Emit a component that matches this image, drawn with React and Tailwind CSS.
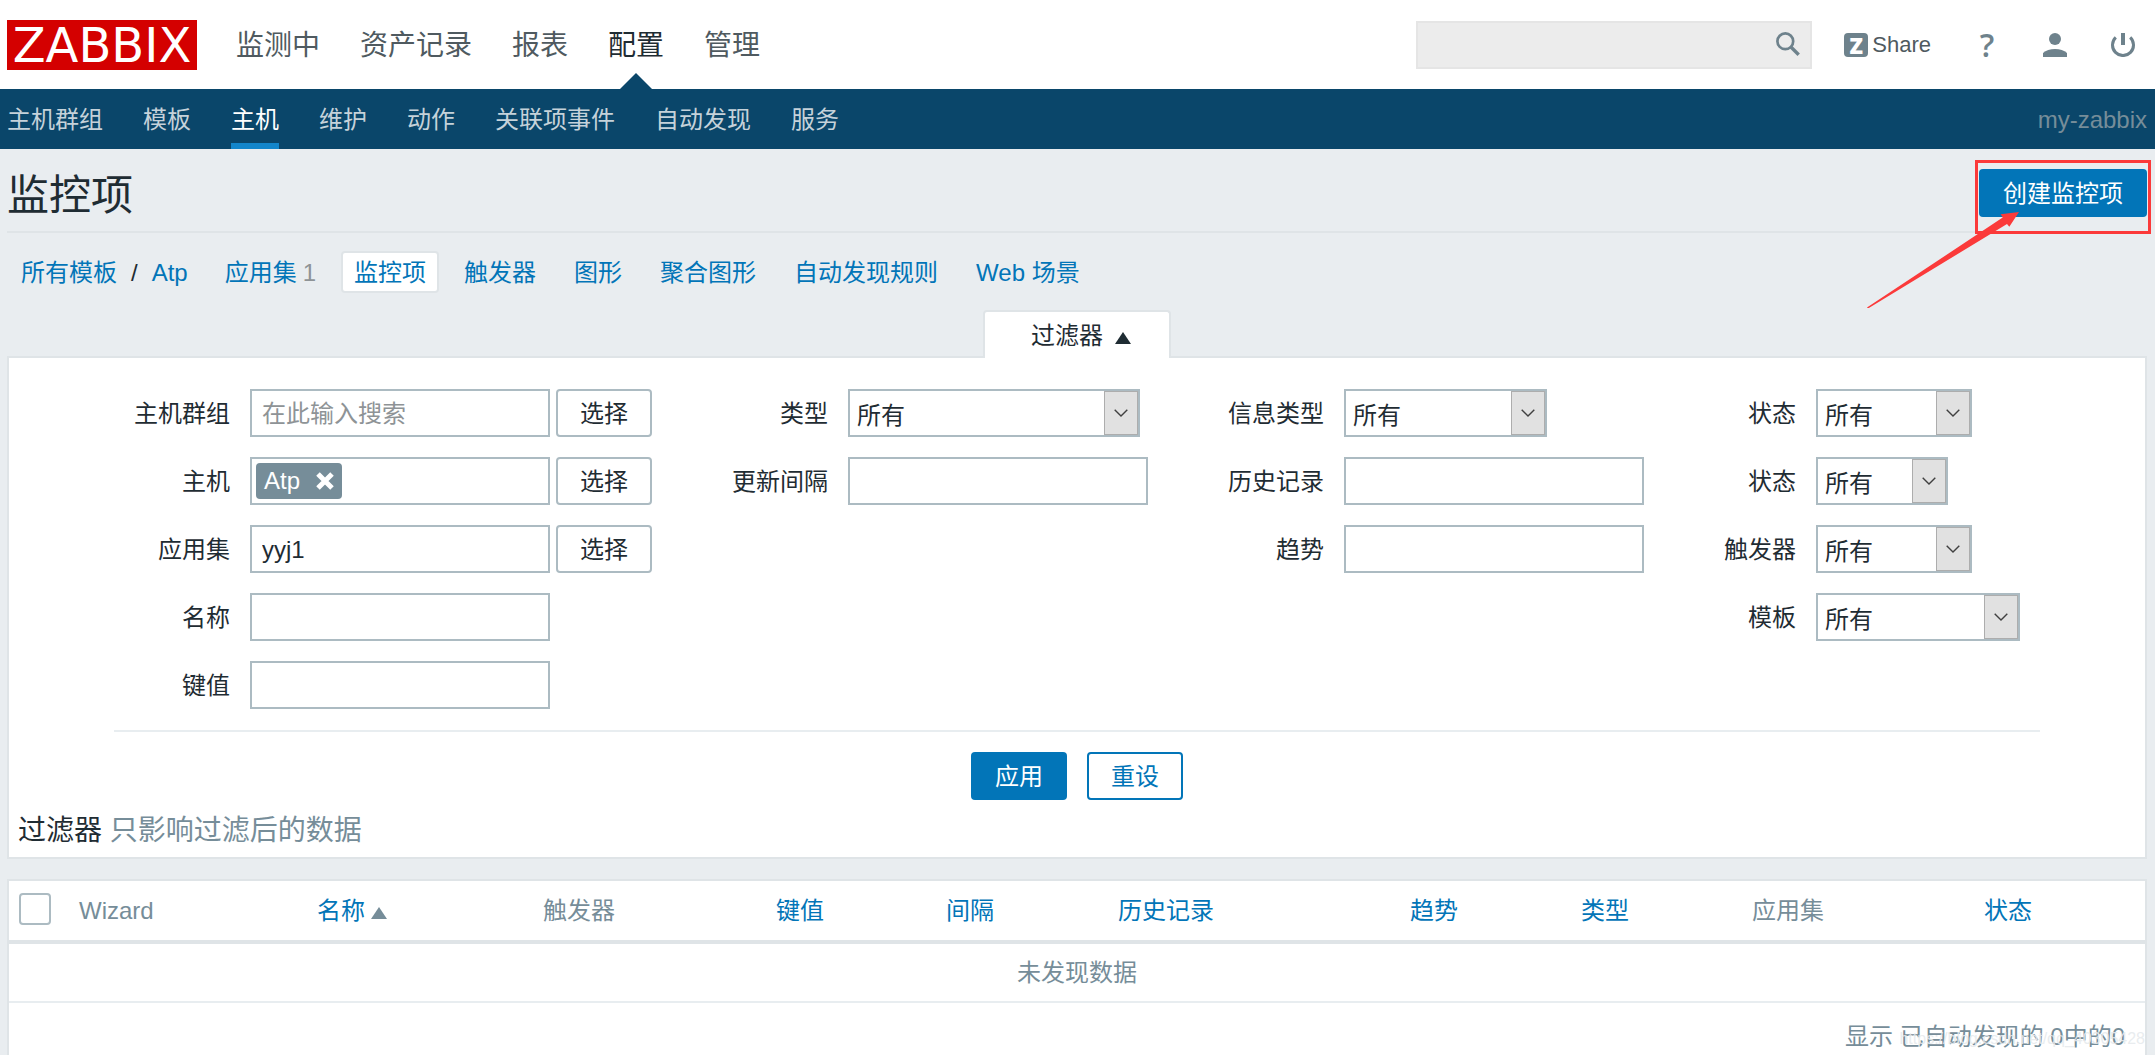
import React from "react";

const mainNav = ["监测中", "资产记录", "报表", "配置", "管理"];
const subNav = ["主机群组", "模板", "主机", "维护", "动作", "关联项事件", "自动发现", "服务"];
const tabs = ["应用集", "监控项", "触发器", "图形", "聚合图形", "自动发现规则", "Web 场景"];

const columns = [
  { name: "", width: 60 },
  { name: "Wizard", width: 238 },
  { name: "名称", width: 226, sortable: true, sorted: true },
  { name: "触发器", width: 233 },
  { name: "键值", width: 170, sortable: true },
  { name: "间隔", width: 172, sortable: true },
  { name: "历史记录", width: 292, sortable: true },
  { name: "趋势", width: 171, sortable: true },
  { name: "类型", width: 171, sortable: true },
  { name: "应用集", width: 232 },
  { name: "状态", width: 171, sortable: true },
];
const totalWidth = columns.reduce((sum, c) => sum + c.width, 0);

function Label({ htmlFor, children }) {
  return (
    <label htmlFor={htmlFor} className="pt-0.5 text-right whitespace-nowrap">
      {children}
    </label>
  );
}

function TextField({ id, label, value, placeholder, picker }) {
  return (
    <>
      <Label htmlFor={id}>{label}</Label>
      <div className="flex gap-1.5">
        <input
          id={id}
          type="text"
          defaultValue={value}
          placeholder={placeholder}
          className="h-12 w-[300px] border-2 border-[#acbbc2] bg-white px-2.5 pt-0.5 text-[#1f2c33] outline-none placeholder:text-[#8e9396]"
        />
        {picker && <PickButton />}
      </div>
    </>
  );
}

function PickButton() {
  return (
    <button type="button" className="h-12 w-24 rounded border-2 border-[#acbbc2] bg-white pt-0.5">
      选择
    </button>
  );
}

function SelectField({ id, label, width }) {
  return (
    <>
      <Label htmlFor={id}>{label}</Label>
      <div className={"relative h-12 " + width}>
        <select
          id={id}
          className="h-12 w-full appearance-none border-2 border-[#acbbc2] bg-white pt-1.5 pl-[7px] text-[#1f2c33] outline-none"
        >
          <option>所有</option>
        </select>
        <span className="pointer-events-none absolute inset-y-0.5 right-0.5 flex w-[34px] items-center justify-center border border-[#adadad] bg-[#e1e1e1]">
          <svg width="14" height="8" viewBox="0 0 14 8" fill="none" stroke="#404040" strokeWidth="1.4">
            <path d="M0.7 0.7L7 7L13.3 0.7" />
          </svg>
        </span>
      </div>
    </>
  );
}

function Triangle({ className }) {
  return (
    <svg width="16" height="12" viewBox="0 0 16 12" className={className}>
      <path d="M8 0L16 12H0Z" fill="currentColor" />
    </svg>
  );
}

function Header() {
  return (
    <header className="flex h-[89px] items-center bg-white pr-5 pl-[7px]">
      <a
        href="#"
        className="flex h-[50px] w-[190px] items-center justify-center bg-[#d40000] font-['DejaVu_Sans',sans-serif] text-[48px] leading-none text-white"
      >
        ZABBIX
      </a>
      <nav className="ml-[39px] flex h-full gap-10 text-[28px]">
        {mainNav.map((item) => (
          <a
            key={item}
            href="#"
            className={
              item === "配置"
                ? "relative flex items-center pt-0.5 text-[#1f2c33]"
                : "flex items-center pt-0.5 text-[#4f5a60]"
            }
          >
            {item}
            {item === "配置" && (
              <svg
                width="32"
                height="16"
                viewBox="0 0 32 16"
                className="absolute bottom-0 left-1/2 -translate-x-1/2"
              >
                <path d="M16 0L32 16H0Z" fill="#0a466a" />
              </svg>
            )}
          </a>
        ))}
      </nav>
      <form className="relative ml-auto" onSubmit={(e) => e.preventDefault()}>
        <input
          type="text"
          aria-label="搜索"
          className="block h-12 w-[396px] border-2 border-[#e5e5e5] bg-[#ececec] pr-12 pl-2.5 outline-none"
        />
        <button type="submit" aria-label="搜索" className="absolute top-[11px] right-3 text-[#6e828c]">
          <svg width="24" height="24" viewBox="0 0 24 24" fill="none" stroke="currentColor">
            <circle cx="9.3" cy="9.3" r="7.9" strokeWidth="2.7" />
            <path d="M14.7 14.7L22.7 22.7" strokeWidth="3.4" />
          </svg>
        </button>
      </form>
      <div className="ml-8 flex items-center gap-11 text-[#6e828c]">
        <a href="#" className="flex items-center gap-1 text-[22px] text-[#4f5a60]">
          <span className="flex size-6 items-center justify-center rounded-sm bg-[#6e828c] font-['Open_Sans',sans-serif] text-[22px] leading-none font-extrabold text-white">
            Z
          </span>
          Share
        </a>
        <a
          href="#"
          className="flex size-6 items-center justify-center font-['Open_Sans',sans-serif] text-[32px] leading-none font-semibold"
        >
          ?
        </a>
        <a href="#" aria-label="用户">
          <svg width="24" height="24" viewBox="0 0 24 24" fill="currentColor">
            <circle cx="12" cy="6" r="6" />
            <path d="M0 24V20C3 17.4 7 16 12 16S21 17.4 24 20V24Z" />
          </svg>
        </a>
        <a href="#" aria-label="退出">
          <svg width="24" height="24" viewBox="0 0 24 24" fill="none" stroke="currentColor" strokeWidth="3">
            <path d="M12 0V12" strokeWidth="4" />
            <path d="M4.8 4.4A10.5 10.5 0 1 0 19.2 4.4" />
          </svg>
        </a>
      </div>
    </header>
  );
}

function SubNav() {
  return (
    <nav className="flex h-[60px] items-stretch gap-10 bg-[#0a466a] pr-2 pl-[7px] text-[#c5d2da]">
      {subNav.map((item) => (
        <a
          key={item}
          href="#"
          className={
            item === "主机"
              ? "flex items-center border-b-[6px] border-[#1386cb] pt-2 text-white"
              : "flex items-center pt-0.5"
          }
        >
          {item}
        </a>
      ))}
      <span className="ml-auto flex items-center pt-0.5 text-[#768d99]">my-zabbix</span>
    </nav>
  );
}

function TitleBar() {
  return (
    <div className="flex h-[84px] items-start justify-between border-b-2 border-[#dfe4e7] pt-5">
      <h1 className="text-[42px] leading-[54px]">监控项</h1>
      <div className="relative">
        <button type="button" className="block h-12 rounded bg-[#0275b8] px-6 pt-0.5 text-white">
          创建监控项
        </button>
        <div className="pointer-events-none absolute -top-[9px] -right-1 -bottom-[17px] -left-1 border-[3px] border-[#fb3a3a]" />
        <svg
          width="152"
          height="96"
          viewBox="0 0 152 96"
          className="pointer-events-none absolute top-[43px] -left-[112px]"
        >
          <path d="M152 0L133.7 2.2L135.7 5.6L0 95.5L1 96.5L140 12L142.3 14.7Z" fill="#fb3a3a" />
        </svg>
      </div>
    </div>
  );
}

function Breadcrumb() {
  return (
    <div className="mt-[18px] flex h-[42px] items-center pl-3.5 text-[#0275b8]">
      <a href="#" className="pt-0.5">
        所有模板
      </a>
      <span className="mx-3.5 pt-0.5 text-[#1f2c33]">/</span>
      <a href="#" className="mr-6 pt-0.5">
        Atp
      </a>
      <nav className="flex gap-3">
        {tabs.map((tab) => (
          <a
            key={tab}
            href="#"
            className={
              tab === "监控项"
                ? "flex h-[42px] items-center rounded border-2 border-[#dfe4e7] bg-white px-[11px] pt-0.5"
                : "flex h-[42px] items-center px-[13px] pt-0.5"
            }
          >
            {tab}
            {tab === "应用集" && <span className="ml-1.5 text-[#8e9396]">1</span>}
          </a>
        ))}
      </nav>
    </div>
  );
}

function Filter() {
  return (
    <section>
      <div className="mt-[17px] flex justify-center">
        <button
          type="button"
          className="relative -mb-0.5 flex h-12 items-center gap-3 rounded-t border-2 border-b-0 border-[#dfe4e7] bg-white pt-0.5 pr-[38px] pl-[46px]"
        >
          过滤器
          <Triangle className="mt-1" />
        </button>
      </div>
      <div className="border-2 border-[#dfe4e7] bg-white pt-[31px] pb-1.5">
        <form onSubmit={(e) => e.preventDefault()}>
          <div className="mx-[105px] flex items-start justify-between gap-5 border-b-2 border-[#e8edf0] px-5 pb-[21px]">
            <div className="grid auto-rows-[48px] grid-cols-[auto_auto] items-center gap-5">
              <TextField id="groups" label="主机群组" placeholder="在此输入搜索" picker />
              <Label htmlFor="hosts">主机</Label>
              <div className="flex gap-1.5">
                <div className="flex h-12 w-[300px] items-center border-2 border-[#acbbc2] bg-white pl-1">
                  <span className="flex h-9 shrink-0 items-center gap-4 rounded bg-[#768d99] px-2 text-white">
                    Atp
                    <button type="button" aria-label="移除 Atp">
                      <svg width="18" height="18" viewBox="0 0 18 18" stroke="currentColor" strokeWidth="5">
                        <path d="M2 2L16 16M16 2L2 16" />
                      </svg>
                    </button>
                  </span>
                  <input id="hosts" type="text" className="h-9 w-full min-w-0 px-2 outline-none" />
                </div>
                <PickButton />
              </div>
              <TextField id="application" label="应用集" value="yyj1" picker />
              <TextField id="name" label="名称" />
              <TextField id="key" label="键值" />
            </div>
            <div className="grid auto-rows-[48px] grid-cols-[auto_auto] items-center gap-5">
              <SelectField id="type" label="类型" width="w-[292px]" />
              <TextField id="delay" label="更新间隔" />
            </div>
            <div className="grid auto-rows-[48px] grid-cols-[auto_auto] items-center gap-5">
              <SelectField id="value-type" label="信息类型" width="w-[203px]" />
              <TextField id="history" label="历史记录" />
              <TextField id="trends" label="趋势" />
            </div>
            <div className="grid auto-rows-[48px] grid-cols-[auto_auto] items-center gap-5">
              <SelectField id="state" label="状态" width="w-[156px]" />
              <SelectField id="status" label="状态" width="w-[132px]" />
              <SelectField id="with-triggers" label="触发器" width="w-[156px]" />
              <SelectField id="templated" label="模板" width="w-[204px]" />
            </div>
          </div>
          <div className="mt-5 flex justify-center gap-5">
            <button type="submit" className="h-12 w-24 rounded bg-[#0275b8] pt-0.5 text-white">
              应用
            </button>
            <button
              type="reset"
              className="h-12 w-24 rounded border-2 border-[#0275b8] bg-white pt-0.5 text-[#0275b8]"
            >
              重设
            </button>
          </div>
        </form>
        <p className="mt-[11px] pl-[9px] text-[28px] leading-10">
          过滤器 <span className="text-[#768d99]">只影响过滤后的数据</span>
        </p>
      </div>
    </section>
  );
}

function ItemsTable() {
  return (
    <section className="mt-5 flex grow flex-col border-2 border-b-0 border-[#dfe4e7] bg-white text-[#768d99]">
      <table className="w-full table-fixed border-collapse">
        <colgroup>
          {columns.map((c, i) => (
            <col key={i} style={{ width: `${(c.width / totalWidth) * 100}%` }} />
          ))}
        </colgroup>
        <thead>
          <tr className="h-[61px] border-b-4 border-[#dfe4e7]">
            {columns.map((c, i) => (
              <th key={i} className="px-2.5 py-0 text-left font-normal whitespace-nowrap">
                {i === 0 ? (
                  <input
                    type="checkbox"
                    aria-label="全选"
                    className="mb-1 block size-8 appearance-none rounded border-2 border-[#acbbc2] bg-white"
                  />
                ) : c.sortable ? (
                  <a href="#" className="inline-flex items-center gap-1.5 text-[#0275b8]">
                    {c.name}
                    {c.sorted && <Triangle className="mt-1 text-[#768d99]" />}
                  </a>
                ) : (
                  c.name
                )}
              </th>
            ))}
          </tr>
        </thead>
        <tbody>
          <tr className="h-[60px] border-b-2 border-[#e8edf0]">
            <td colSpan={columns.length} className="p-0 text-center">
              未发现数据
            </td>
          </tr>
        </tbody>
      </table>
      <div className="relative pt-[18px] pr-5 text-right leading-8">
        显示 已自动发现的 0中的0
        <span className="absolute right-0 bottom-0 text-[16px] leading-7 text-[#e6eaed]/90">
          https://blog.csdn.net/qq_40305428
        </span>
      </div>
    </section>
  );
}

export default function App() {
  return (
    <div className="flex min-h-screen flex-col bg-[#e9edf0] font-['Liberation_Sans','Noto_Sans_CJK_SC',sans-serif] text-[24px] leading-8 text-[#1f2c33]">
      <Header />
      <SubNav />
      <main className="flex grow flex-col pr-2 pl-[7px]">
        <TitleBar />
        <Breadcrumb />
        <Filter />
        <ItemsTable />
      </main>
    </div>
  );
}
